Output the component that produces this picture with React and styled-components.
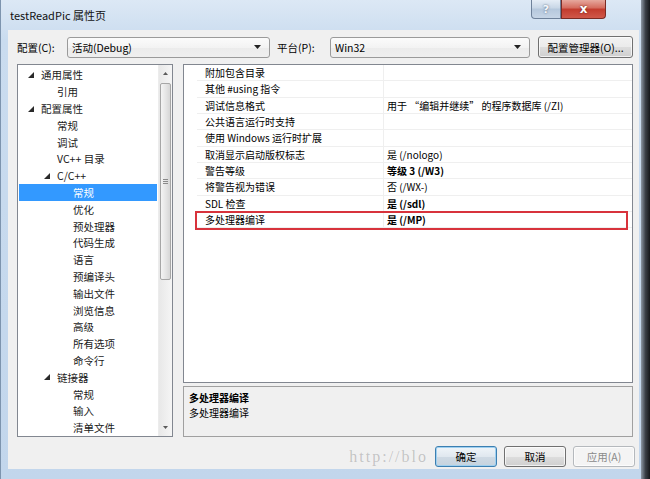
import React from "react";
import styled, { createGlobalStyle } from "styled-components";

const GlobalStyle = createGlobalStyle`
  html, body {
    margin: 0;
    padding: 0;
    width: 650px;
    height: 479px;
    overflow: hidden;
    background: #1d2025;
  }
  body {
    font-family: "Noto Sans CJK SC", "Noto Sans", sans-serif;
    font-size: 10px;
    color: #000;
  }
`;

const treeItems = [
  { label: "通用属性", level: 0, arrow: true },
  { label: "引用", level: 1 },
  { label: "配置属性", level: 0, arrow: true },
  { label: "常规", level: 1 },
  { label: "调试", level: 1 },
  { label: "VC++ 目录", level: 1 },
  { label: "C/C++", level: 1, arrow: true },
  { label: "常规", level: 2, selected: true },
  { label: "优化", level: 2 },
  { label: "预处理器", level: 2 },
  { label: "代码生成", level: 2 },
  { label: "语言", level: 2 },
  { label: "预编译头", level: 2 },
  { label: "输出文件", level: 2 },
  { label: "浏览信息", level: 2 },
  { label: "高级", level: 2 },
  { label: "所有选项", level: 2 },
  { label: "命令行", level: 2 },
  { label: "链接器", level: 1, arrow: true },
  { label: "常规", level: 2 },
  { label: "输入", level: 2 },
  { label: "清单文件", level: 2 },
];

const props = [
  { name: "附加包含目录", value: "" },
  { name: "其他 #using 指令", value: "" },
  { name: "调试信息格式", value: "用于 “编辑并继续” 的程序数据库 (/ZI)" },
  { name: "公共语言运行时支持", value: "" },
  { name: "使用 Windows 运行时扩展", value: "" },
  { name: "取消显示启动版权标志", value: "是 (/nologo)" },
  { name: "警告等级", value: "等级 3 (/W3)", bold: true },
  { name: "将警告视为错误", value: "否 (/WX-)" },
  { name: "SDL 检查", value: "是 (/sdl)", bold: true },
  { name: "多处理器编译", value: "是 (/MP)", bold: true, marked: true },
];

const Screen = styled.div`
  display: flex;
  width: 650px;
  height: 479px;
`;

const Window = styled.div`
  width: 641px;
  height: 479px;
  box-sizing: border-box;
  display: flex;
  flex-direction: column;
  padding: 0 2px 10px 7px;
  border-left: 1px solid #7d94ae;
  background: linear-gradient(#dce8f5, #cadcef 40px, #c2d6ec);
`;

const Backdrop = styled.div`
  flex: 1;
  background: linear-gradient(to right, #8d98a5, #3a3f46 50%, #15171a);
`;

const TitleBar = styled.div`
  height: 30px;
  display: flex;
  align-items: flex-start;
`;

const Title = styled.div`
  font-size: 11px;
  line-height: 30px;
  padding-left: 2px;
  color: #111;
  flex: 1;
`;

const Caption = styled.div`
  display: flex;
  margin-right: 33px;
`;

const CaptionButton = styled.div`
  width: ${(p) => (p.$close ? 45 : 30)}px;
  height: 19px;
  box-sizing: border-box;
  display: flex;
  align-items: center;
  justify-content: center;
  border: 1px solid ${(p) => (p.$close ? "#7a2b24" : "#6e819a")};
  border-top: none;
  border-radius: ${(p) => (p.$close ? "0 0 4px 0" : "0 0 0 4px")};
  background: ${(p) =>
    p.$close
      ? "linear-gradient(#e6a89d, #d46a5c 45%, #c23b2d 50%, #d0584a)"
      : "linear-gradient(#e5edf6, #c8d6e6 45%, #b5c7dc 50%, #c6d5e6)"};
  color: ${(p) => (p.$close ? "#fff" : "#f4f7fb")};
  font-family: "DejaVu Sans", sans-serif;
  font-weight: bold;
  font-size: ${(p) => (p.$close ? 12 : 11)}px;
  text-shadow: 0 0 2px ${(p) => (p.$close ? "#5a1810" : "#4a5a70")};
`;

const Client = styled.div`
  flex: 1;
  display: flex;
  flex-direction: column;
  background: #f0f0f0;
  padding: 6px 6px 2px 9px;
  box-sizing: border-box;
`;

const Toolbar = styled.div`
  height: 22px;
  display: flex;
  align-items: center;
`;

const Label = styled.span`
  width: ${(p) => p.$w}px;
  font-size: 10.5px;
`;

const Combo = styled.div`
  width: ${(p) => p.$w}px;
  height: 21px;
  box-sizing: border-box;
  display: flex;
  align-items: center;
  justify-content: space-between;
  padding: 0 8px 0 4px;
  border: 1px solid #9a9a9a;
  border-radius: 3px;
  background: linear-gradient(#fbfbfb, #f3f3f3 50%, #ebebeb 51%, #efefef);
  font-size: 10.5px;
  margin-right: ${(p) => p.$mr || 0}px;
`;

const DropArrow = () => (
  <svg width="7" height="4" viewBox="0 0 7 4">
    <polygon points="0,0 7,0 3.5,4" fill="#222" />
  </svg>
);

const Button = styled.div`
  width: ${(p) => p.$w}px;
  height: ${(p) => p.$h || 21}px;
  box-sizing: border-box;
  display: flex;
  align-items: center;
  justify-content: center;
  border-radius: 3px;
  font-size: 10.5px;
  border: 1px solid ${(p) => (p.$default ? "#3c7fb1" : p.$disabled ? "#b5b9bd" : "#707070")};
  color: ${(p) => (p.$disabled ? "#8a8a8a" : "#000")};
  background: ${(p) =>
    p.$disabled
      ? "#f4f4f4"
      : p.$default
      ? "linear-gradient(#f0f5f9, #e0e8ef 50%, #cfdae4 51%, #c6d3de)"
      : "linear-gradient(#f2f2f2, #ebebeb 50%, #dddddd 51%, #cfcfcf)"};
  box-shadow: inset 0 0 0 1px ${(p) => (p.$default ? "#9fd0f0" : "rgba(255,255,255,0.7)")};
`;

const Panels = styled.div`
  margin-top: 6px;
  height: 373px;
  display: flex;
  gap: 10px;
`;

const Tree = styled.div`
  width: 156px;
  box-sizing: border-box;
  display: flex;
  border: 1px solid #828790;
  background: #fff;
`;

const TreeList = styled.div`
  flex: 1;
  padding-top: 1.6px;
  overflow: hidden;
`;

const TreeRow = styled.div`
  height: 16.8px;
  display: flex;
  align-items: center;
  margin: 0 1px 0 1px;
  padding-left: ${(p) => 9 + p.$level * 16}px;
  font-size: 10.5px;
  background: ${(p) => (p.$selected ? "#3399ff" : "transparent")};
  color: ${(p) => (p.$selected ? "#fff" : "#1a1a1a")};
`;

const Expander = styled.span`
  width: 13px;
  flex: none;
  display: flex;
  align-items: center;
`;

const Scrollbar = styled.div`
  width: 13px;
  display: flex;
  flex-direction: column;
  background: linear-gradient(to right, #e8e8e8, #f5f5f5);
  border-left: 1px solid #ececec;
`;

const ScrollArrow = styled.div`
  height: 17px;
  display: flex;
  align-items: center;
  justify-content: center;
`;

const Thumb = styled.div`
  height: 195px;
  margin: 1px 1px 0 1px;
  border: 1px solid #a6a6a6;
  border-radius: 2px;
  background: linear-gradient(to right, #f4f4f4, #e6e6e6 50%, #d6d6d6);
  display: flex;
  align-items: center;
  justify-content: center;
`;

const Grip = styled.div`
  width: 5px;
  height: 5px;
  background: repeating-linear-gradient(#8a8a8a 0 1px, transparent 1px 2px);
`;

const Spacer = styled.div`
  flex: 1;
`;

const RightColumn = styled.div`
  flex: 1;
  display: flex;
  flex-direction: column;
  gap: 3px;
`;

const Grid = styled.div`
  height: 319px;
  box-sizing: border-box;
  border: 1px solid #828790;
  background: #fff;
`;

const PropRow = styled.div`
  position: relative;
  height: 16.33px;
  display: grid;
  grid-template-columns: 13px 186px 1fr;
  font-size: 10px;
  line-height: 16px;

  ${(p) =>
    p.$marked &&
    `
    &::after {
      content: "";
      position: absolute;
      left: 11px;
      right: 4px;
      top: -1px;
      bottom: -2px;
      border: 2px solid #d8333c;
    }
  `}
`;

const Cell = styled.div`
  border-bottom: 1px solid #efefef;
  padding-left: ${(p) => (p.$value ? 3 : 8)}px;
  border-left: ${(p) => (p.$value ? "1px solid #efefef" : "none")};
  font-weight: ${(p) => (p.$bold ? "bold" : "normal")};
  white-space: nowrap;
  overflow: hidden;
`;

const Description = styled.div`
  height: 51px;
  box-sizing: border-box;
  border: 1px solid #a0a0a0;
  background: #f0f0f0;
  padding: 3px 5px;
  font-size: 10px;
  line-height: 15px;
`;

const DescTitle = styled.div`
  font-weight: bold;
`;

const Footer = styled.div`
  margin-top: 9px;
  margin-right: -2px;
  display: flex;
  align-items: center;
  justify-content: flex-end;
  gap: 7px;
`;

const Watermark = styled.div`
  white-space: nowrap;
  font-family: "Liberation Serif", serif;
  font-size: 16px;
  line-height: 21px;
  letter-spacing: 2px;
  color: rgba(90, 90, 90, 0.3);
`;

const TreeArrow = () => (
  <svg width="6" height="6" viewBox="0 0 6 6">
    <polygon points="6,0 6,6 0,6" fill="#2a2a2a" />
  </svg>
);

const SmallTri = ({ up }) => (
  <svg width="5" height="3" viewBox="0 0 5 3">
    <polygon points={up ? "0,3 5,3 2.5,0" : "0,0 5,0 2.5,3"} fill="#5a5a5a" />
  </svg>
);

export default function App() {
  return (
    <Screen>
      <GlobalStyle />
      <Window>
        <TitleBar>
          <Title>testReadPic 属性页</Title>
          <Caption>
            <CaptionButton>?</CaptionButton>
            <CaptionButton $close>x</CaptionButton>
          </Caption>
        </TitleBar>
        <Client>
          <Toolbar>
            <Label $w={50}>配置(C):</Label>
            <Combo $w={203} $mr={7}>
              <span>活动(Debug)</span>
              <DropArrow />
            </Combo>
            <Label $w={53}>平台(P):</Label>
            <Combo $w={200} $mr={8}>
              <span>Win32</span>
              <DropArrow />
            </Combo>
            <Button $w={95} $h={22}>配置管理器(O)...</Button>
          </Toolbar>
          <Panels>
            <Tree>
              <TreeList>
                {treeItems.map((it, i) => (
                  <TreeRow key={i} $level={it.level} $selected={it.selected}>
                    <Expander>{it.arrow && <TreeArrow />}</Expander>
                    {it.label}
                  </TreeRow>
                ))}
              </TreeList>
              <Scrollbar>
                <ScrollArrow>
                  <SmallTri up />
                </ScrollArrow>
                <Thumb>
                  <Grip />
                </Thumb>
                <Spacer />
                <ScrollArrow>
                  <SmallTri />
                </ScrollArrow>
              </Scrollbar>
            </Tree>
            <RightColumn>
              <Grid>
                {props.map((p, i) => (
                  <PropRow key={i} $marked={p.marked}>
                    <span />
                    <Cell>{p.name}</Cell>
                    <Cell $value $bold={p.bold}>{p.value}</Cell>
                  </PropRow>
                ))}
              </Grid>
              <Description>
                <DescTitle>多处理器编译</DescTitle>
                <div>多处理器编译</div>
              </Description>
            </RightColumn>
          </Panels>
          <Footer>
            <Watermark>http://blo</Watermark>
            <Button $w={62} $default>确定</Button>
            <Button $w={62}>取消</Button>
            <Button $w={62} $disabled>应用(A)</Button>
          </Footer>
        </Client>
      </Window>
      <Backdrop />
    </Screen>
  );
}
